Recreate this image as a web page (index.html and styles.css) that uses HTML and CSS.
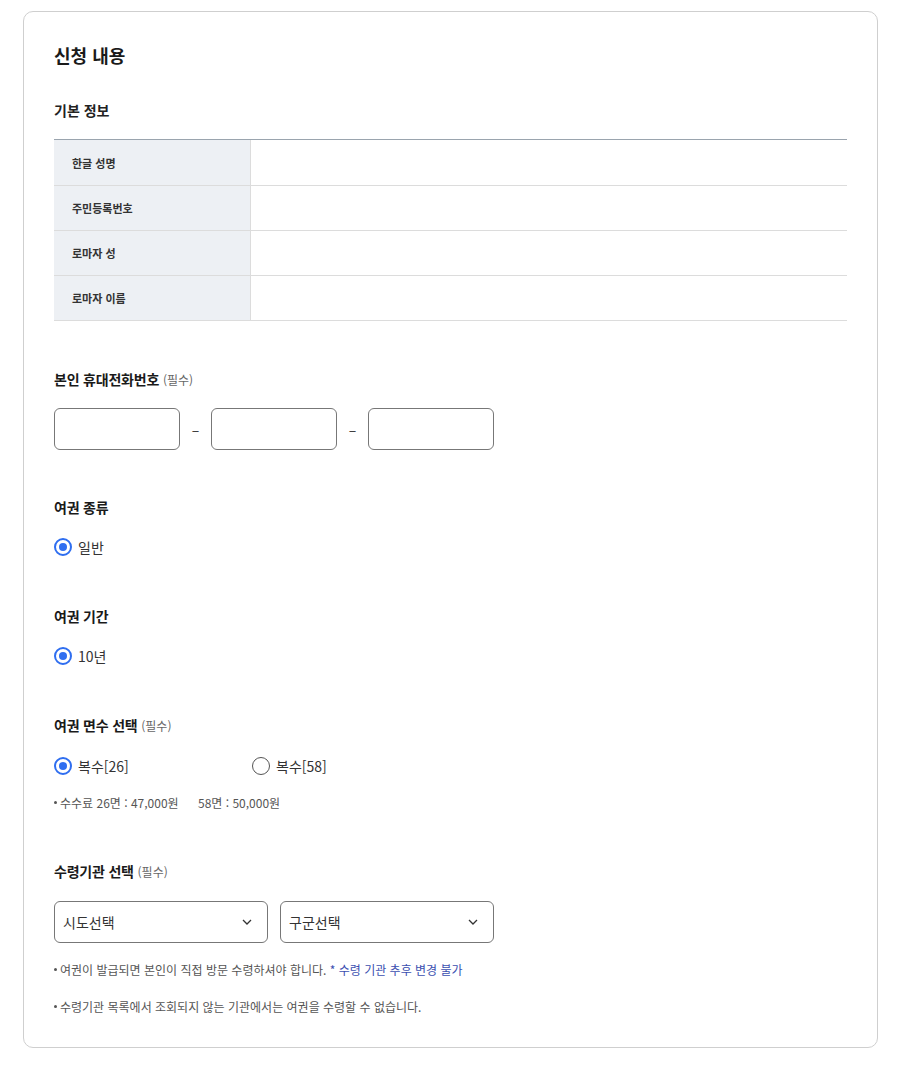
FILE: index.html
```html
<!DOCTYPE html>
<html lang="ko">
  <head>
    <meta charset="UTF-8" />
    <meta name="viewport" content="width=device-width, initial-scale=1.0" />
    <title>신청 내용</title>
    <link rel="stylesheet" href="styles.css">
  </head>
  <body>
    <div class="card">
      <h2 class="card-title">신청 내용</h2>

      <h3 class="sub-title">기본 정보</h3>
      <table class="info-table">
        <tr><th>한글 성명</th><td></td></tr>
        <tr><th>주민등록번호</th><td></td></tr>
        <tr><th>로마자 성</th><td></td></tr>
        <tr><th>로마자 이름</th><td></td></tr>
      </table>

      <div class="section phone-section">
        <h3 class="field-label">본인 휴대전화번호 <span class="req">(필수)</span></h3>
        <div class="phone-row">
          <input type="text" class="text-box" />
          <span class="dash">–</span>
          <input type="text" class="text-box" />
          <span class="dash">–</span>
          <input type="text" class="text-box" />
        </div>
      </div>

      <div class="section after-phone">
        <h3 class="field-label">여권 종류</h3>
        <div class="radio-row">
          <label class="radio"><span class="radio-mark checked"></span>일반</label>
        </div>
      </div>

      <div class="section">
        <h3 class="field-label">여권 기간</h3>
        <div class="radio-row">
          <label class="radio"><span class="radio-mark checked"></span>10년</label>
        </div>
      </div>

      <div class="section">
        <h3 class="field-label">여권 면수 선택 <span class="req">(필수)</span></h3>
        <div class="radio-row">
          <label class="radio wide"><span class="radio-mark checked"></span>복수[26]</label>
          <label class="radio"><span class="radio-mark"></span>복수[58]</label>
        </div>
        <p class="note">수수료 26면 : 47,000원 <span class="gap">58면 : 50,000원</span></p>
      </div>

      <div class="section">
        <h3 class="field-label">수령기관 선택 <span class="req">(필수)</span></h3>
        <div class="select-row">
          <div class="select-box">
            <span>시도선택</span>
            <svg width="10" height="6" viewBox="0 0 10 6"><path d="M1 1l4 4 4-4" fill="none" stroke="#333" stroke-width="1.3"/></svg>
          </div>
          <div class="select-box">
            <span>구군선택</span>
            <svg width="10" height="6" viewBox="0 0 10 6"><path d="M1 1l4 4 4-4" fill="none" stroke="#333" stroke-width="1.3"/></svg>
          </div>
        </div>
        <p class="note note-first">여권이 발급되면 본인이 직접 방문 수령하셔야 합니다. <span class="blue">* 수령 기관 추후 변경 불가</span></p>
        <p class="note note-second">수령기관 목록에서 조회되지 않는 기관에서는 여권을 수령할 수 없습니다.</p>
      </div>
    </div>
  </body>
</html>
```

FILE: styles.css
```css
* {
  margin: 0;
  padding: 0;
  box-sizing: border-box;
}

body {
  font-family: "Noto Sans CJK KR", "Noto Sans", sans-serif;
  background: #ffffff;
  color: #222;
}

.card {
  width: 855px;
  margin: 11px 0 18px 23px;
  padding: 30px 30px 31px;
  border: 1px solid #cfcfcf;
  border-radius: 10px;
  background: #fff;
}

.card-title {
  font-size: 18px;
  font-weight: 700;
  line-height: 26px;
  color: #1a1a1a;
}

.sub-title {
  margin-top: 32px;
  font-size: 14px;
  font-weight: 700;
  line-height: 20px;
}

.info-table {
  width: 100%;
  margin-top: 19px;
  border-collapse: separate;
  border-spacing: 0;
  border-top: 1px solid #9aa4ae;
}

.info-table th,
.info-table td {
  height: 45px;
  border-bottom: 1px solid #dcdcdc;
}

.info-table tr:first-child th,
.info-table tr:first-child td {
  height: 46px;
}

.info-table th {
  width: 197px;
  padding-left: 18px;
  text-align: left;
  font-size: 11px;
  font-weight: 700;
  color: #333;
  background: #edf0f4;
  border-right: 1px solid #dcdcdc;
}

.section {
  margin-top: 49px;
}

.section.phone-section {
  margin-top: 48px;
}

.section.after-phone {
  margin-top: 47px;
}

.field-label {
  font-size: 14px;
  font-weight: 700;
  line-height: 20px;
  color: #1a1a1a;
  letter-spacing: -0.2px;
}

.req {
  font-size: 12px;
  font-weight: 400;
  color: #666;
  letter-spacing: 0;
}

.phone-row {
  display: flex;
  align-items: center;
  margin-top: 18px;
}

.text-box {
  width: 126px;
  height: 42px;
  border: 1px solid #777;
  border-radius: 6px;
  outline: none;
}

.dash {
  width: 31px;
  text-align: center;
  font-size: 14px;
  color: #333;
}

.radio-row {
  display: flex;
  margin-top: 20px;
}

.radio {
  display: flex;
  align-items: center;
  gap: 6px;
  height: 20px;
  font-size: 14px;
  color: #333;
}

.radio.wide {
  width: 198px;
}

.radio-mark {
  position: relative;
  width: 18px;
  height: 18px;
  border: 1.5px solid #555;
  border-radius: 50%;
}

.radio-mark.checked {
  border: 2px solid #2f6ef0;
}

.radio-mark.checked::after {
  content: "";
  position: absolute;
  top: 3px;
  left: 3px;
  width: 8px;
  height: 8px;
  border-radius: 50%;
  background: #2f6ef0;
}

.note {
  position: relative;
  margin-top: 18px;
  padding-left: 6px;
  font-size: 12px;
  line-height: 18px;
  color: #555;
}

.note::before {
  content: "";
  position: absolute;
  left: 0;
  top: 7px;
  width: 3px;
  height: 3px;
  border-radius: 50%;
  background: #555;
}

.gap {
  margin-left: 16px;
}

.blue {
  color: #3b4fb0;
}

.select-row {
  display: flex;
  gap: 12px;
  margin-top: 19px;
}

.select-box {
  display: flex;
  justify-content: space-between;
  align-items: center;
  width: 214px;
  height: 42px;
  padding: 0 15px 0 8px;
  border: 1px solid #777;
  border-radius: 6px;
  font-size: 14px;
  color: #333;
}

.note-first {
  margin-top: 18px;
}

.note-second {
  margin-top: 19px;
}
```
